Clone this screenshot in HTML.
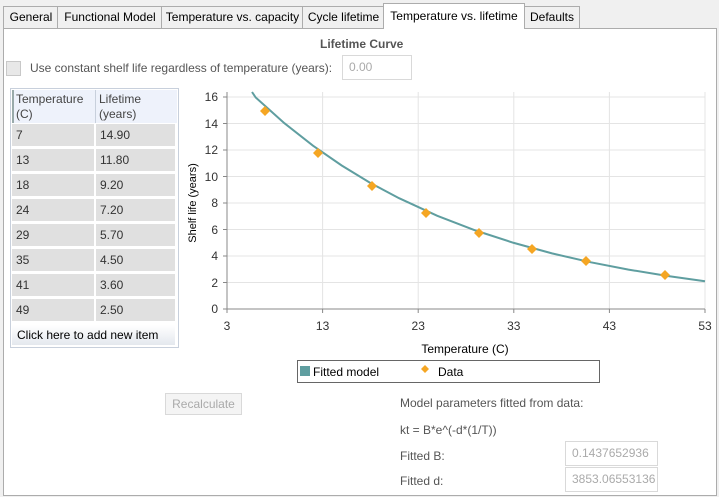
<!DOCTYPE html><html><head><style>
body{margin:0;width:719px;height:497px;background:#f0f0f0;font-family:"Liberation Sans",sans-serif;font-size:12px;color:#000;position:relative;overflow:hidden}
.a{position:absolute}
.tab{position:absolute;top:6px;height:21px;border:1px solid #acacac;background:#f0f0f0;line-height:21px;text-align:center;font-size:12px}
.cell{position:absolute;background:#e0e0e0;height:22px;line-height:22px;padding-left:4px;color:#333;box-sizing:border-box}
.box{position:absolute;border:1px solid #d9d9d9;background:#fff;color:#aaa;line-height:22px;padding-left:6px;box-sizing:border-box;height:25px}
.lbl{position:absolute;color:#555}
</style></head><body>
<div class="a" style="left:3px;top:28px;width:712px;height:466px;border:1px solid #acacac;background:#fff"></div>
<div class="tab" style="left:3px;width:54px">General</div>
<div class="tab" style="left:57px;width:104px">Functional Model</div>
<div class="tab" style="left:161px;width:141px">Temperature vs. capacity</div>
<div class="tab" style="left:302px;width:81px">Cycle lifetime</div>
<div class="tab" style="left:383px;top:3px;height:25px;line-height:25px;width:140px;background:#fff;border-bottom:none">Temperature vs. lifetime</div>
<div class="tab" style="left:524px;width:54px">Defaults</div>
<div class="a" style="left:320px;top:37px;font-weight:bold;color:#555">Lifetime Curve</div>
<div class="a" style="left:6px;top:61px;width:13px;height:13px;border:1px solid #c8c8c8;background:#e8e8e8"></div>
<div class="lbl" style="left:30px;top:61px">Use constant shelf life regardless of temperature (years):</div>
<div class="box" style="left:342px;top:55px;width:70px">0.00</div>
<div class="a" style="left:10px;top:88px;width:167px;height:258px;border:1px solid #c8d0dc;background:#fff"></div>
<div class="a" style="left:12px;top:90px;width:163px;height:33px;background:#eef2fb;border-left:2px solid #9aa"></div>
<div class="a" style="left:16px;top:92px;line-height:15px;color:#444">Temperature<br>(C)</div>
<div class="a" style="left:95px;top:90px;width:1px;height:33px;background:#c8d0dc"></div>
<div class="a" style="left:99px;top:92px;line-height:15px;color:#444">Lifetime<br>(years)</div>
<div id="rows"></div>
<div class="a" style="left:12px;top:325px;width:163px;height:20px;line-height:20px;background:linear-gradient(#fff,#e4e8ee)"><span style="padding-left:5px">Click here to add new item</span></div>
<svg class="a" style="left:0;top:0" width="719" height="497" font-family="Liberation Sans" font-size="12" fill="#333">
<g stroke="#e4e4e4"><line x1="322.6" y1="92" x2="322.6" y2="309"/><line x1="418.2" y1="92" x2="418.2" y2="309"/><line x1="513.8" y1="92" x2="513.8" y2="309"/><line x1="609.4" y1="92" x2="609.4" y2="309"/><line x1="705" y1="92" x2="705" y2="309"/>
<line x1="227" y1="97" x2="705" y2="97"/><line x1="227" y1="123.5" x2="705" y2="123.5"/><line x1="227" y1="150" x2="705" y2="150"/><line x1="227" y1="176.5" x2="705" y2="176.5"/><line x1="227" y1="203" x2="705" y2="203"/><line x1="227" y1="229.5" x2="705" y2="229.5"/><line x1="227" y1="256" x2="705" y2="256"/><line x1="227" y1="282.5" x2="705" y2="282.5"/></g>
<g stroke="#888"><line x1="227" y1="92" x2="227" y2="309"/><line x1="227" y1="309" x2="705" y2="309"/>
<line x1="223" y1="97" x2="227" y2="97"/><line x1="223" y1="123.5" x2="227" y2="123.5"/><line x1="223" y1="150" x2="227" y2="150"/><line x1="223" y1="176.5" x2="227" y2="176.5"/><line x1="223" y1="203" x2="227" y2="203"/><line x1="223" y1="229.5" x2="227" y2="229.5"/><line x1="223" y1="256" x2="227" y2="256"/><line x1="223" y1="282.5" x2="227" y2="282.5"/><line x1="223" y1="309" x2="227" y2="309"/>
<line x1="227" y1="309" x2="227" y2="313"/><line x1="322.6" y1="309" x2="322.6" y2="313"/><line x1="418.2" y1="309" x2="418.2" y2="313"/><line x1="513.8" y1="309" x2="513.8" y2="313"/><line x1="609.4" y1="309" x2="609.4" y2="313"/><line x1="705" y1="309" x2="705" y2="313"/></g>
<g text-anchor="end"><text x="218" y="101">16</text><text x="218" y="128">14</text><text x="218" y="154">12</text><text x="218" y="181">10</text><text x="218" y="207">8</text><text x="218" y="234">6</text><text x="218" y="260">4</text><text x="218" y="287">2</text><text x="218" y="313">0</text></g>
<g text-anchor="middle"><text x="227" y="330">3</text><text x="322.6" y="330">13</text><text x="418.2" y="330">23</text><text x="513.8" y="330">33</text><text x="609.4" y="330">43</text><text x="705" y="330">53</text>
<text x="465" y="353" fill="#000">Temperature (C)</text>
<text transform="translate(196,203) rotate(-90)" fill="#000" font-size="11">Shelf life (years)</text></g>
<polyline fill="none" stroke="#5f9ea0" stroke-width="2" points="252,92 255.7,97.5 284.4,123.2 313,145.7 341.7,165.5 370.4,183 399.1,198.2 437.3,215.8 475.6,230.5 513.8,242.9 552,253.4 590.3,262.2 628.5,269.6 666.8,275.9 705,281.2"/>
<g fill="#f5a623"><path d="M265 106l5 5-5 5-5-5z"/><path d="M318 148l5 5-5 5-5-5z"/><path d="M372 181l5 5-5 5-5-5z"/><path d="M426 208l5 5-5 5-5-5z"/><path d="M479 228l5 5-5 5-5-5z"/><path d="M532 244l5 5-5 5-5-5z"/><path d="M586 256l5 5-5 5-5-5z"/><path d="M665 270l5 5-5 5-5-5z"/></g>
<rect x="297.5" y="360.5" width="302" height="22" fill="#fff" stroke="#666"/>
<rect x="300" y="366" width="10" height="10" fill="#5f9ea0"/>
<text x="313" y="376" fill="#000">Fitted model</text>
<path d="M425 365l4 4-4 4-4-4z" fill="#f5a623"/>
<text x="438" y="376" fill="#000">Data</text>
</svg>
<div class="a" style="left:165px;top:393px;width:75px;height:20px;border:1px solid #d9d9d9;background:#f4f4f4;color:#aaa;text-align:center;line-height:20px">Recalculate</div>
<div class="lbl" style="left:400px;top:396px">Model parameters fitted from data:</div>
<div class="lbl" style="left:400px;top:423px">kt = B*e^(-d*(1/T))</div>
<div class="lbl" style="left:400px;top:449px">Fitted B:</div>
<div class="box" style="left:565px;top:441px;width:93px">0.1437652936</div>
<div class="lbl" style="left:400px;top:474px">Fitted d:</div>
<div class="box" style="left:565px;top:467px;width:93px">3853.06553136</div>
<div class="a" style="left:12px;top:124px">
<div class="cell" style="left:0;top:0;width:82px">7</div><div class="cell" style="left:84px;top:0;width:79px">14.90</div>
<div class="cell" style="left:0;top:25px;width:82px">13</div><div class="cell" style="left:84px;top:25px;width:79px">11.80</div>
<div class="cell" style="left:0;top:50px;width:82px">18</div><div class="cell" style="left:84px;top:50px;width:79px">9.20</div>
<div class="cell" style="left:0;top:75px;width:82px">24</div><div class="cell" style="left:84px;top:75px;width:79px">7.20</div>
<div class="cell" style="left:0;top:100px;width:82px">29</div><div class="cell" style="left:84px;top:100px;width:79px">5.70</div>
<div class="cell" style="left:0;top:125px;width:82px">35</div><div class="cell" style="left:84px;top:125px;width:79px">4.50</div>
<div class="cell" style="left:0;top:150px;width:82px">41</div><div class="cell" style="left:84px;top:150px;width:79px">3.60</div>
<div class="cell" style="left:0;top:175px;width:82px">49</div><div class="cell" style="left:84px;top:175px;width:79px">2.50</div>
</div>
</body></html>
